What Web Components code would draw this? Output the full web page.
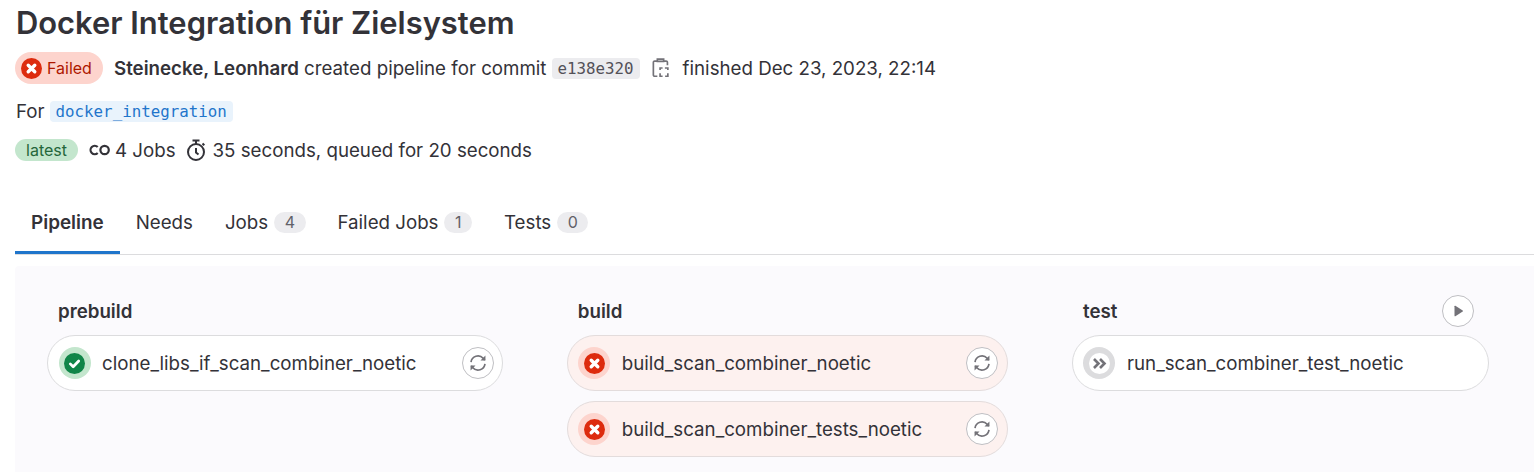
<!DOCTYPE html>
<html>
<head>
<meta charset="utf-8">
<style>
  html, body { margin: 0; background: #fff; overflow: hidden; }
  body {
    height: 472px;
    font-family: Inter, "Noto Sans", sans-serif;
    font-size: 18.720px;
    color: #333238;
  }
</style>
</head>
<body>
<template id="icons">
  <svg id="fail" viewBox="0 0 16 16"><circle cx="8" cy="8" r="8" fill="currentColor"/><path d="M5.500 5.500l5 5M10.500 5.500l-5 5" stroke="#fff" stroke-width="2.600" stroke-linecap="round" fill="none"/></svg>
  <svg id="ok" viewBox="0 0 16 16"><circle cx="8" cy="8" r="8" fill="currentColor"/><path d="M4.800 8.300l2.200 2.200 4.200-4.400" stroke="#fff" stroke-width="2.100" stroke-linecap="round" stroke-linejoin="round" fill="none"/></svg>
  <svg id="skip" viewBox="0 0 16 16"><circle cx="8" cy="8" r="8" fill="#fff"/><path d="M3.800 4.600L7.200 8l-3.400 3.400M8.400 4.600L11.800 8l-3.400 3.400" stroke="currentColor" stroke-width="2" fill="none"/></svg>
  <svg id="retry" viewBox="0 0 16 16" fill="none" stroke="currentColor" stroke-width="1.500"><path d="M1.800 7.200A6.200 6.200 0 0 1 12.600 3.800l1.400 1.600"/><path d="M14.200 8.800A6.200 6.200 0 0 1 3.400 12.200L2 10.600"/><path d="M14.600 1.400v4.400h-4.400z" fill="currentColor" stroke="none"/><path d="M1.400 14.600v-4.400h4.400z" fill="currentColor" stroke="none"/></svg>
  <svg id="play" viewBox="0 0 16 16"><path d="M4 2.600v10.800c0 .5.5.8 1 .5l8.400-5.400c.4-.3.4-.7 0-1L5 2.100c-.5-.3-1-.1-1 .5z" fill="currentColor"/></svg>
</template>

<pipeline-header></pipeline-header>
<pipeline-tabs></pipeline-tabs>
<pipeline-graph>
  <pipeline-stage name="prebuild" style="width:456px;margin-left:32px">
    <pipeline-job status="ok">clone_libs_if_scan_combiner_noetic</pipeline-job>
  </pipeline-stage>
  <pipeline-stage name="build" style="width:441px;margin-left:63.800px">
    <pipeline-job status="fail" style="padding-right:8.500px">build_scan_combiner_noetic</pipeline-job>
    <pipeline-job status="fail" style="padding-right:8.500px">build_scan_combiner_tests_noetic</pipeline-job>
  </pipeline-stage>
  <pipeline-stage name="test" action style="width:417px;margin-left:64.200px">
    <pipeline-job status="skip" noretry>run_scan_combiner_test_noetic</pipeline-job>
  </pipeline-stage>
</pipeline-graph>

<script>
function icon(id) {
  return document.getElementById("icons").content.getElementById(id).outerHTML;
}

class PipelineHeader extends HTMLElement {
  constructor() {
    super();
    this.attachShadow({ mode: "open" });
    this.shadowRoot.innerHTML = `
      <style>
        :host { display: block; padding-left: 15px; height: 181px; }
        h1 { margin: 0; padding-left: 1px; height: 46px; font-size: 30.900px; line-height: 46px; font-weight: 600; }
        .row { display: flex; align-items: center; }
        .status { display: flex; align-items: center; box-sizing: border-box; height: 32px; width: 88px; padding-left: 6px; margin-right: 11px; border-radius: 16px; background: #fdd4cd; color: #ae1800; font-size: 16px; }
        .status svg { width: 21px; height: 21px; margin-right: 5px; color: #dd2b0e; }
        b { font-weight: 600; }
        code { font-family: "DejaVu Sans Mono", monospace; font-size: 15.800px; line-height: 21px; height: 21px; border-radius: 4px; padding: 0 6px; }
        .sha { background: #ececef; color: #535158; margin: 0 12px 0 5px; }
        .clip { width: 17px; height: 21px; margin-right: 14px; color: #737278; }
        .ref { background: #e9f3fc; color: #1f75cb; margin-left: 5px; }
        .latest { background: #c3e6cd; color: #24663b; font-size: 16px; height: 22px; line-height: 22px; width: 63px; text-align: center; border-radius: 11px; margin-right: 11px; }
      </style>
      <h1>Docker Integration für Zielsystem</h1>
      <div class="row" style="height:32px;margin-top:6px">
        <span class="status">${icon("fail")}Failed</span>
        <span><b>Steinecke, Leonhard</b> created pipeline for commit</span>
        <code class="sha">e138e320</code>
        <svg class="clip" viewBox="0 0 16 20" fill="none" stroke="currentColor" stroke-width="1.600"><path d="M5 3H2.500A1.200 1.200 0 0 0 1.200 4.200v12A1.200 1.200 0 0 0 2.500 17.400H5M11 3h2.300A1.200 1.200 0 0 1 14.600 4.200V7"/><path d="M5 3.200h6V1H5z"/><path d="M7.600 11.500V9.500H10M12.200 9.500h2.800v2M15 14.500v2.900h-2.600M10 17.400H7.600v-2.900"/></svg>
        <span>finished Dec 23, 2023, 22:14</span>
      </div>
      <div class="row" style="height:24px;margin-top:15px;margin-bottom:15px">
        <span style="padding-left:1px">For</span><code class="ref">docker_integration</code>
      </div>
      <div class="row" style="height:24px">
        <span class="latest">latest</span>
        <svg viewBox="0 0 21 12" width="21" height="12" fill="none" stroke="#333238" stroke-width="2.200" style="margin-right:5px"><path d="M8.700 3A4.200 4.200 0 1 0 8.700 9"/><circle cx="15.600" cy="6" r="4.200"/></svg>
        <span style="margin-right:10px">4 Jobs</span>
        <svg viewBox="0 0 20 22" width="20" height="22" fill="none" stroke="#333238" stroke-width="2" style="margin-right:7px"><circle cx="10" cy="13" r="8"/><path d="M6.500 1.500h7M10 2v3M10 9v4.500l2.500 2M16.500 4.500l1.800 1.800"/></svg>
        <span>35 seconds, queued for 20 seconds</span>
      </div>
    `;
  }
}

class PipelineTabs extends HTMLElement {
  constructor() {
    super();
    this.attachShadow({ mode: "open" });
    const tabs = [["Pipeline"], ["Needs"], ["Jobs", 4], ["Failed Jobs", 1], ["Tests", 0]];
    this.shadowRoot.innerHTML = `
      <style>
        :host { display: block; margin-left: 15px; height: 74px; box-sizing: border-box; border-bottom: 1px solid #dcdcde; }
        nav { display: flex; height: 73px; }
        a { display: flex; align-items: center; height: 57px; padding: 13px 16px 0; border-bottom: 3px solid transparent; color: #333238; }
        a.on { font-weight: 600; font-size: 18.900px; border-bottom-color: #1f75cb; }
        span { margin-left: 6px; background: #ececef; color: #626168; font-size: 16px; height: 21px; line-height: 21px; padding: 0 10.500px; border-radius: 11px; }
      </style>
      <nav>${tabs.map((t, i) => `<a class="${i ? "" : "on"}">${t[0]}${t.length > 1 ? `<span>${t[1]}</span>` : ""}</a>`).join("")}</nav>
    `;
  }
}

class PipelineGraph extends HTMLElement {
  constructor() {
    super();
    this.attachShadow({ mode: "open" });
    this.shadowRoot.innerHTML = `
      <style>
        :host { display: flex; box-sizing: border-box; margin: 11px 0 0 15px; padding-top: 29px; height: 206px; background: #fbfafd; border-radius: 4px 0 0 0; align-items: flex-start; }
      </style>
      <slot></slot>
    `;
  }
}

class PipelineStage extends HTMLElement {
  constructor() {
    super();
    this.attachShadow({ mode: "open" });
    this.shadowRoot.innerHTML = `
      <style>
        :host { display: block; flex: none; }
        header { display: flex; align-items: center; justify-content: space-between; height: 32px; margin-bottom: 8px; padding: 0 15px 0 11px; font-weight: 600; }
        button { all: unset; display: flex; align-items: center; justify-content: center; box-sizing: border-box; width: 32px; height: 32px; border: 1px solid #bfbfc3; border-radius: 50%; background: #fff; color: #737278; }
        button svg { width: 14px; height: 14px; }
        .jobs { display: flex; flex-direction: column; gap: 10px; }
      </style>
      <header><span></span></header>
      <div class="jobs"><slot></slot></div>
    `;
  }
  connectedCallback() {
    this.shadowRoot.querySelector("span").textContent = this.getAttribute("name");
    if (this.hasAttribute("action")) {
      const b = document.createElement("button");
      b.innerHTML = icon("play");
      this.shadowRoot.querySelector("header").appendChild(b);
    }
  }
}

class PipelineJob extends HTMLElement {
  constructor() {
    super();
    this.attachShadow({ mode: "open" });
    this.shadowRoot.innerHTML = `
      <style>
        :host { display: flex; align-items: center; box-sizing: border-box; height: 56px; padding: 0 8px 0 10.500px; border: 1px solid #dcdcde; border-radius: 28px; background: #fff; }
        :host([status=fail]) { background: #fdf1ef; border-color: #e3dcdc; }
        .st { display: flex; align-items: center; justify-content: center; width: 32px; height: 32px; border-radius: 50%; margin-right: 11.500px; flex: none; }
        .st svg { width: 21px; height: 21px; }
        .ok { background: #c3e6cd; color: #108548; }
        .fail { background: #fdd4cd; color: #dd2b0e; }
        .skip { background: #dcdcde; color: #737278; }
        .txt { flex: 1; }
        button { all: unset; display: flex; align-items: center; justify-content: center; box-sizing: border-box; width: 32px; height: 32px; border: 1px solid #bfbfc3; border-radius: 50%; background: #fff; color: #737278; }
        button svg { width: 18px; height: 18px; }
      </style>
      <span class="st"></span><span class="txt"><slot></slot></span>
    `;
  }
  connectedCallback() {
    const status = this.getAttribute("status");
    const st = this.shadowRoot.querySelector(".st");
    st.classList.add(status);
    st.innerHTML = icon(status);
    if (!this.hasAttribute("noretry")) {
      const b = document.createElement("button");
      b.innerHTML = icon("retry");
      this.shadowRoot.appendChild(b);
    }
  }
}

customElements.define("pipeline-header", PipelineHeader);
customElements.define("pipeline-tabs", PipelineTabs);
customElements.define("pipeline-graph", PipelineGraph);
customElements.define("pipeline-stage", PipelineStage);
customElements.define("pipeline-job", PipelineJob);
</script>
</body>
</html>
